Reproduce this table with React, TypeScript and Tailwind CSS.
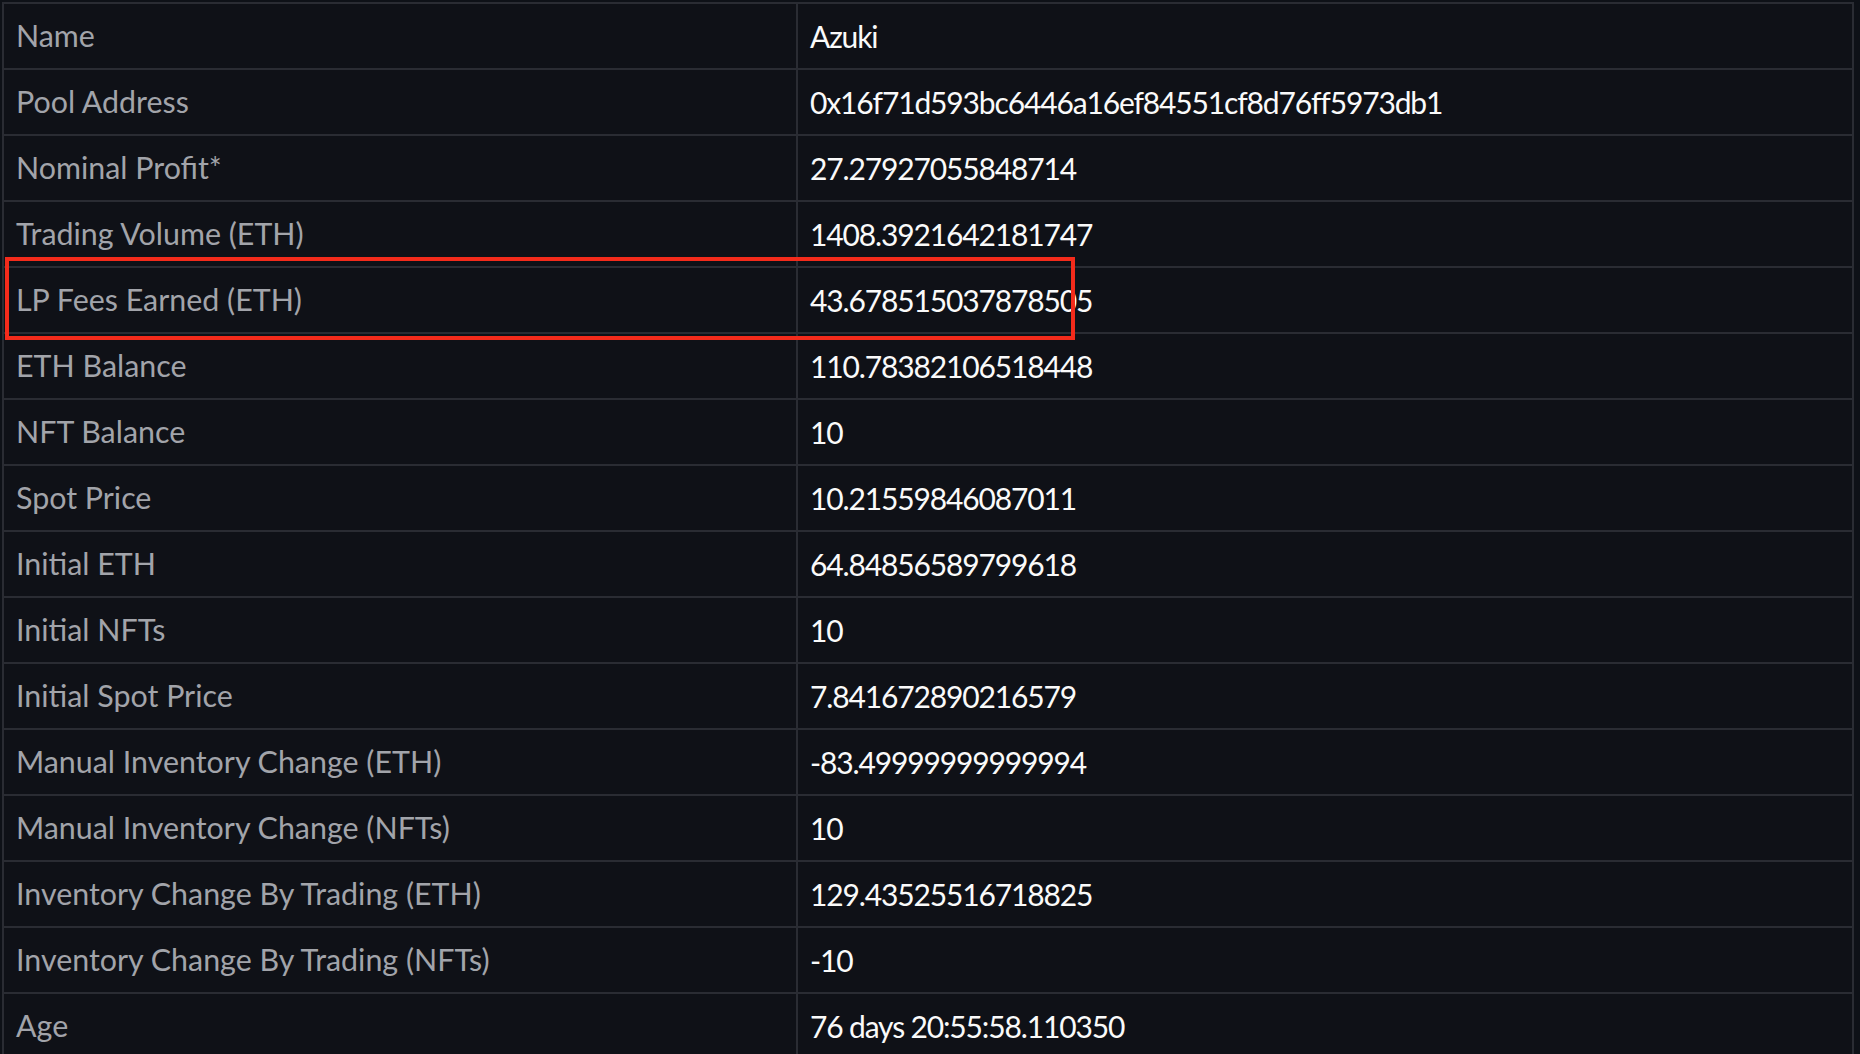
const rows: [string, string][] = [
  ['Name', 'Azuki'],
  ['Pool Address', '0x16f71d593bc6446a16ef84551cf8d76ff5973db1'],
  ['Nominal Profit*', '27.27927055848714'],
  ['Trading Volume (ETH)', '1408.3921642181747'],
  ['LP Fees Earned (ETH)', '43.678515037878505'],
  ['ETH Balance', '110.78382106518448'],
  ['NFT Balance', '10'],
  ['Spot Price', '10.21559846087011'],
  ['Initial ETH', '64.84856589799618'],
  ['Initial NFTs', '10'],
  ['Initial Spot Price', '7.841672890216579'],
  ['Manual Inventory Change (ETH)', '-83.49999999999994'],
  ['Manual Inventory Change (NFTs)', '10'],
  ['Inventory Change By Trading (ETH)', '129.43525516718825'],
  ['Inventory Change By Trading (NFTs)', '-10'],
  ['Age', '76 days 20:55:58.110350'],
]

export default function App() {
  return (
    <div className="relative h-[1054px] w-full overflow-hidden bg-[#0e1117] pl-[2px] pt-[2px] font-['Lato',sans-serif] text-[30px]">
      <div className="w-[1852px] border-l-2 border-t-2 border-[#2a2c33] bg-[#0f1117]">
        {rows.map(([label, value]) => (
          <div key={label} className="flex h-[66px] border-b-2 border-[#2a2c33]">
            <div className="flex w-[794px] items-center border-r-2 border-[#2a2c33] pl-[12px] text-[30.4px] text-[#a2a4aa]">
              {label}
            </div>
            <div className="flex flex-1 items-center border-r-2 border-[#2a2c33] pl-[12px] tracking-[-1.15px] text-[#fafafa]">
              {value}
            </div>
          </div>
        ))}
      </div>
      <div className="pointer-events-none absolute left-[5px] top-[257px] h-[83px] w-[1070px] border-4 border-[#f42b1b]" />
    </div>
  )
}
